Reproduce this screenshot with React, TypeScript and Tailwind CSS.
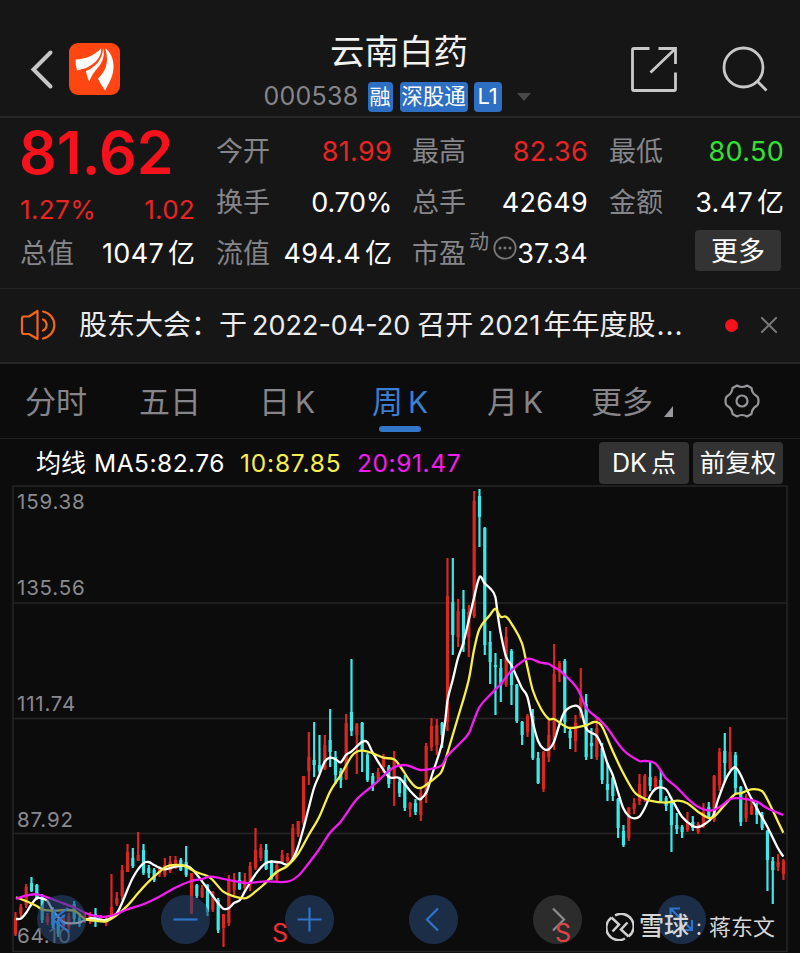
import type { ReactNode } from 'react'
import { clsx } from 'clsx'

// [direction, high, low, body top, body bottom] in chart coordinates
type Candle = ['r' | 'c', number, number, number?, number?]
type Point = [number, number]

const CANDLE_START = 15.5
const CANDLE_STEP = 5.333

const candles: Candle[] = [
  ['r', 912, 936, 918, 934], ['r', 904, 917], ['r', 884, 908], ['c', 877, 892, 883, 891], ['c', 884, 900, 885, 899],
  ['c', 894, 923], ['r', 913, 925], ['c', 907, 928], ['c', 919, 937], ['r', 915, 930],
  ['r', 913, 930], ['c', 901, 922], ['c', 915, 927], ['r', 913, 923], ['r', 912, 924],
  ['c', 908, 927, 914, 922], ['r', 915, 922], ['r', 916, 926], ['r', 874, 917, 907, 915], ['r', 892, 906, 898, 904],
  ['r', 865, 900, 870, 896], ['r', 844, 872, 852, 872], ['c', 848, 868, 858, 866], ['r', 832, 861, 855, 861], ['c', 844, 875, 850, 873],
  ['c', 865, 878, 868, 873], ['c', 868, 882, 870, 880], ['r', 866, 877], ['r', 858, 877, 865, 875], ['r', 856, 873, 862, 871],
  ['r', 856, 869, 860, 867], ['c', 858, 871, 860, 870], ['c', 846, 877, 862, 875], ['r', 873, 914, 873, 913], ['c', 884, 898, 885, 896],
  ['r', 885, 898, 888, 897], ['c', 884, 916, 885, 912], ['r', 891, 912, 892, 910], ['c', 898, 933, 900, 930], ['r', 914, 947, 914, 928],
  ['r', 875, 926, 880, 923], ['r', 873, 895, 882, 890], ['c', 872, 890, 880, 889], ['r', 873, 890, 880, 888], ['r', 862, 891, 866, 885],
  ['r', 828, 870, 850, 868], ['r', 844, 861, 848, 858], ['c', 844, 870, 850, 869], ['c', 860, 880, 863, 879], ['r', 863, 881, 865, 879],
  ['r', 850, 863, 855, 862], ['r', 853, 863, 857, 861], ['r', 824, 860, 828, 859], ['r', 821, 837, 821, 834], ['r', 776, 825, 776, 823],
  ['r', 732, 785, 757, 771], ['c', 722, 777, 760, 765], ['c', 735, 773, 765, 771], ['r', 735, 770, 745, 769], ['c', 709, 767, 740, 752],
  ['c', 751, 784, 757, 775], ['c', 768, 788, 771, 780], ['r', 714, 780, 723, 779], ['c', 659, 736, 712, 731], ['r', 723, 774, 724, 735],
  ['c', 722, 772, 723, 750], ['c', 753, 782, 755, 780], ['c', 773, 791, 776, 785], ['r', 768, 780, 772, 779], ['r', 754, 773, 757, 767],
  ['c', 765, 788, 767, 784], ['r', 751, 806, 759, 778], ['c', 777, 797, 782, 793], ['c', 775, 811, 780, 808], ['r', 802, 817, 803, 809],
  ['c', 799, 815, 803, 812], ['r', 788, 821, 793, 815], ['r', 743, 803, 746, 795], ['r', 718, 751, 726, 747], ['r', 719, 755, 725, 745],
  ['c', 722, 748, 723, 735], ['r', 558, 731, 596, 722], ['c', 558, 655, 602, 635], ['r', 599, 647, 611, 637], ['c', 590, 652, 609, 645],
  ['r', 605, 657, 612, 637], ['r', 491, 618, 501, 616], ['c', 489, 547, 496, 517], ['c', 527, 655, 528, 645], ['c', 631, 684, 642, 662],
  ['c', 653, 715, 665, 667], ['c', 659, 702, 668, 685], ['r', 627, 687, 637, 685], ['c', 649, 705, 651, 685], ['c', 684, 723, 685, 721],
  ['c', 721, 745, 722, 735], ['r', 714, 737, 716, 732], ['c', 709, 760, 716, 758], ['c', 752, 784, 758, 783], ['r', 751, 792, 752, 789],
  ['r', 720, 762, 735, 757], ['r', 644, 750, 674, 740], ['r', 661, 682, 663, 672], ['c', 659, 733, 661, 722], ['c', 727, 749, 731, 738],
  ['r', 715, 752, 723, 741], ['r', 668, 718, 698, 716], ['c', 694, 760, 704, 757], ['c', 728, 759, 743, 746], ['r', 717, 760, 728, 757],
  ['c', 743, 784, 748, 780], ['c', 763, 801, 784, 790], ['c', 777, 801, 778, 796], ['c', 798, 838, 799, 828], ['c', 825, 847, 831, 845],
  ['r', 807, 841, 808, 838], ['r', 798, 814, 803, 809], ['r', 774, 805, 784, 801], ['r', 774, 802, 776, 797], ['c', 762, 791, 777, 786],
  ['r', 776, 790, 778, 788], ['c', 770, 802, 780, 801], ['c', 796, 811, 798, 806], ['c', 800, 852, 802, 825], ['c', 813, 834, 825, 829],
  ['c', 825, 838, 827, 832], ['r', 812, 832, 821, 830], ['c', 816, 831, 822, 828], ['r', 822, 834, 824, 832], ['r', 803, 828, 812, 826],
  ['c', 802, 818, 807, 817], ['r', 775, 822, 776, 820], ['r', 748, 791, 752, 785], ['c', 733, 782, 751, 763], ['r', 727, 770, 752, 769],
  ['c', 752, 793, 755, 788], ['c', 786, 826, 787, 822], ['r', 794, 822, 803, 818], ['r', 798, 815, 806, 814], ['c', 803, 824, 808, 815],
  ['c', 812, 830, 815, 828], ['c', 830, 891, 831, 860], ['c', 857, 904, 861, 870], ['r', 854, 871, 862, 867], ['r', 859, 880, 861, 874],
]

const ma5: Point[] = [
  [16, 919], [21, 918.5], [26, 913], [31, 905], [37, 898], [42, 898.6], [47.5, 901], [52.5, 910], [58, 917], [63, 922], [69, 923.3],
  [79, 922.6], [90, 918.3], [106, 920], [116.7, 913.3], [122, 903], [132.7, 878], [143, 863.5], [148.7, 862], [154, 865], [164.7, 869.3],
  [175, 866.7], [186, 865.7], [193, 870], [207, 888], [218, 903], [223.3, 908.7], [228.7, 908.3], [234, 903], [240, 900], [244.7, 891.7],
  [255, 875], [266, 863], [280, 862.3], [287.3, 864.5], [293, 858.5], [298, 847], [303.3, 829], [308.7, 808], [314, 788], [319.3, 775],
  [324.7, 761.7], [330, 757.7], [335.3, 759], [340.7, 762.3], [346, 755], [351.3, 751.7], [362, 742], [367.3, 742], [372.7, 752.7],
  [388.7, 776.7], [399.3, 778], [410, 790.7], [418, 798.7], [420.7, 799], [426.7, 791.7], [432, 775], [442, 743.3], [445.3, 720],
  [447.6, 700], [452.7, 680], [458, 658], [463.3, 643], [474, 598], [479.6, 577], [484.7, 583.3], [490, 588.3], [495.3, 596.7],
  [498, 616.7], [500.7, 633.3], [506, 656.7], [511.3, 665], [522, 688.3], [527.3, 696.7], [533, 723], [538, 740.7], [543.3, 748.7],
  [548.7, 749.3], [554, 741.7], [559.3, 725], [564.7, 711.7], [575.3, 705.7], [580.7, 710], [586, 728.3], [591.3, 732.7], [596.7, 736],
  [602, 746.7], [607.3, 763], [612.7, 775], [618, 792], [623.3, 808.3], [628.7, 816], [634, 818.3], [639.3, 816.7], [644.7, 808.3],
  [650, 796], [655.3, 789], [660.7, 787.3], [666, 789.3], [671.3, 798.3], [682, 816.7], [692.7, 826], [698, 827], [703.3, 825],
  [712.7, 816.7], [718, 800], [724.7, 781.7], [730, 771.7], [735.3, 767.3], [740.7, 775], [748.7, 793.3], [756.7, 808.3],
  [767.3, 826.7], [778, 848.3], [783.3, 856.7],
]

const ma10: Point[] = [
  [16, 897.3], [26, 901], [36.7, 906], [42, 909.3], [52.7, 910.7], [66.7, 910], [74, 910.7], [79.3, 914], [84.7, 919], [95.3, 920.7],
  [106, 921.3], [116.7, 915], [127.3, 905.7], [138, 893.3], [148.7, 881.7], [164.7, 867.7], [170, 865.3], [180.7, 865], [186, 866.7],
  [196.7, 872.3], [207.3, 876], [212.7, 880], [223.3, 891.7], [234, 896.3], [244.7, 898.3], [250, 896], [255.3, 891.7], [263.3, 885],
  [276.7, 872], [287.3, 866], [298, 854], [308.7, 835], [319.3, 816.7], [330, 791.7], [340.7, 775], [351.3, 756.7], [356.7, 751.7],
  [363.3, 750.7], [372.7, 753.3], [383.3, 757.7], [394, 759.3], [399.3, 765], [410, 781], [415.3, 786.7], [420.7, 788], [426, 785],
  [436.7, 776.7], [442, 770.7], [447.3, 753.3], [457.5, 719], [468.7, 680], [474, 650], [479.3, 629.3], [490, 615], [495.3, 609],
  [500.7, 616.7], [506, 616.7], [511.3, 623.3], [522, 643.3], [527.3, 666.7], [532.7, 690], [540.7, 708.3], [548.7, 719], [554, 719],
  [564.7, 726], [570, 728], [586, 725.3], [594, 722], [599.3, 723.3], [603, 728.3], [612.7, 751], [623.3, 773.3], [634, 791.7],
  [639.3, 796], [650, 800.7], [666, 802.7], [678, 800.7], [687.3, 803.3], [698, 811.7], [708.7, 818], [714, 816.7], [724.7, 805],
  [735.3, 794], [740.7, 793.3], [751.3, 789.3], [762, 791], [767.3, 799.3], [778, 821.7], [783.3, 832.7],
]

const ma20: Point[] = [
  [16, 898.7], [26, 895.7], [36.7, 894.3], [47.3, 897.3], [63.3, 903.3], [74, 907.3], [84.7, 912.7], [95.3, 916], [106, 916.7],
  [116.7, 914], [127.3, 909.3], [143.3, 904.3], [159.3, 896.7], [175.3, 887.7], [191.3, 881], [202, 879], [210, 876.7], [220.7, 878.3],
  [234, 881], [244.7, 883], [255.3, 882.3], [265, 881.3], [287.3, 881.7], [298, 876], [308.7, 863.3], [319.3, 849], [330, 832.7],
  [340.7, 821.7], [356.7, 799.3], [372.7, 785.7], [383.3, 776], [394, 767.3], [404.7, 765], [412.7, 767.3], [420.7, 770], [434, 768.3],
  [442, 765], [447.3, 756], [460, 743.3], [468.7, 733.3], [474, 720], [479.3, 707.3], [490, 695], [500.7, 684], [511.3, 670.7],
  [522, 661.7], [529.3, 658.7], [540.7, 662.7], [548.7, 664], [554, 667.3], [559.3, 670], [564.7, 675], [575.3, 685.7], [580.7, 695],
  [586, 707.7], [599.3, 719.5], [606.7, 727.3], [623.3, 750], [639.3, 761], [644.7, 761], [655.3, 763.3], [666, 778.3], [676.7, 787.3],
  [687.3, 798.3], [698, 806.7], [710, 810.7], [719.3, 807.3], [730, 799.3], [740.7, 798.3], [756.7, 801.7], [767.3, 808.3], [783.3, 815],
]

// control points sit a third of the way along x, so the curve never loops back
function smoothPath(line: Point[]) {
  const slope = (i: number) => {
    const [x0, y0] = line[Math.max(i - 1, 0)]
    const [x1, y1] = line[Math.min(i + 1, line.length - 1)]
    return (y1 - y0) / (x1 - x0)
  }
  return line.reduce((path, [x, y], i) => {
    if (i === 0) return `M${x} ${y}`
    const [px, py] = line[i - 1]
    const dx = (x - px) / 3
    return `${path}C${px + dx} ${py + slope(i - 1) * dx} ${x - dx} ${y - slope(i) * dx} ${x} ${y}`
  }, '')
}

function Stat({ label, value, tone = 'text-white' }: { label: string; value: string; tone?: string }) {
  const unit = value.endsWith('亿')
  return (
    <div className="flex h-[51px] items-center justify-between">
      <span className="text-[27px] text-[#85858a]">{label}</span>
      <span className={clsx('text-[27px]', value.endsWith('%') ? 'tracking-[-0.3px]' : 'tracking-[0.3px]', tone)}>
        {unit ? value.slice(0, -1) : value}
        {unit && <span className="ml-1 tracking-normal">亿</span>}
      </span>
    </div>
  )
}

function Header() {
  return (
    <header className="flex h-[118px] border-b-2 border-[#272727]">
      <div className="flex w-[240px] items-start pt-[43px] pl-[29px]">
        <svg className="h-[52px] w-[40px]" viewBox="0 0 40 52" fill="none" stroke="#c6c6c6" strokeWidth="4" strokeLinecap="round">
          <path d="M21.500 9.500 4.500 26.500 21.500 43.500" strokeLinejoin="miter" />
        </svg>
        <svg className="h-[52px] w-[52px]" viewBox="0 0 52 52">
          <rect width="51" height="52" rx="9" fill="#ff4612" />
          <g fill="#fff">
            <path d="M6.7 16.5C17 16 25 12.500 32 5.500C33 10 30 16 25 20C20 24.500 14 26 8.300 27.500C6.800 24 6.500 20 6.700 16.500Z" />
            <path d="M34 5C36 12 34 17 31 22C27 27 23 31 20.300 38.700C18.500 35 17.500 31 17 28C25 25 34 17 34 5Z" />
            <path d="M36 5C42 9 45 17 44.500 25C44 34 40 40 36 47.500C34 44 31 40 29 35.500C36 29 41 20 36 5Z" />
          </g>
        </svg>
      </div>
      <div className="flex w-[320px] flex-col items-center">
        <h1 className="mt-[31px] h-[42px] pr-[2px] text-[34.5px] leading-[42px] text-[#f2f2f2]">云南白药</h1>
        <div className="mt-[8px] mr-[6px] flex h-[31px] items-center">
          <span className="mr-[9px] text-[25px] tracking-[0.3px] text-[#85858a]">000538</span>
          <span className="mr-[7px] flex h-[30px] w-[25px] items-center justify-center rounded-[4px] bg-[#2c6fc3] text-[21px] text-white">融</span>
          <span className="mr-[6px] flex h-[30px] w-[68px] items-center justify-center rounded-[4px] bg-[#2c6fc3] text-[21.5px] text-white">深股通</span>
          <span className="flex h-[30px] w-[28px] items-center justify-center rounded-[4px] bg-[#2c6fc3] text-[22px] text-white">L1</span>
          <svg className="ml-[15px] h-[8px] w-[14px]" viewBox="0 0 14 8">
            <path d="M0 0H14L7 8Z" fill="#48484a" />
          </svg>
        </div>
      </div>
      <div className="flex flex-1 items-start pt-[44px] pl-[68px]">
        <svg className="h-[50px] w-[52px]" viewBox="0 0 52 50" fill="none" stroke="#c8c8c8" strokeWidth="2.8">
          <path d="M21.5 4.5H6Q4.500 4.500 4.500 6V45Q4.500 46.500 6 46.500H46Q47.500 46.500 47.500 45V28.500" />
          <path d="M30.5 4.5H47.500V20M47 5 22.500 28.500" />
        </svg>
        <svg className="ml-[40px] h-[50px] w-[52px]" viewBox="0 0 52 50" fill="none" stroke="#c8c8c8" strokeWidth="2.8">
          <circle cx="23.5" cy="23.5" r="19.5" />
          <path d="M37 37 46.500 46.500" />
        </svg>
      </div>
    </header>
  )
}

function Quote() {
  return (
    <section className="flex h-[171px] border-b border-[#242424] pt-[8px] pl-[20px] leading-none">
      <div className="w-[175px]">
        <div className="-mt-[3px] -ml-[1px] h-[68px] text-[59px] leading-[60px] font-semibold text-[#f6121c]">81.62</div>
        <div className="flex h-[37px] items-center justify-between pt-[1px] text-[26px] text-[#ea2424]">
          <span className="tracking-[0.4px]">1.27%</span>
          <span className="tracking-[0.3px]">1.02</span>
        </div>
        <Stat label="总值" value="1047亿" />
      </div>
      <div className="ml-[21px] w-[176px]">
        <Stat label="今开" value="81.99" tone="text-[#ea2424]" />
        <Stat label="换手" value="0.70%" />
        <Stat label="流值" value="494.4亿" />
      </div>
      <div className="ml-[20px] w-[176px]">
        <Stat label="最高" value="82.36" tone="text-[#ea2424]" />
        <Stat label="总手" value="42649" />
        <div className="flex h-[51px] items-center whitespace-nowrap">
          <span className="text-[27px] text-[#85858a]">市盈</span>
          <span className="mb-[23px] ml-[3px] text-[20px] text-[#85858a]">动</span>
          <svg className="mb-[12px] ml-[4px] h-[24px] w-[24px] shrink-0" viewBox="0 0 24 24" fill="#77777a">
            <circle cx="12" cy="12" r="10.7" fill="none" stroke="#77777a" strokeWidth="1.8" />
            <circle cx="7" cy="12" r="1.5" />
            <circle cx="12" cy="12" r="1.5" />
            <circle cx="17" cy="12" r="1.5" />
          </svg>
          <span className="ml-auto text-[27px] tracking-[0.2px] text-white">37.34</span>
        </div>
      </div>
      <div className="ml-[21px] w-[175px]">
        <Stat label="最低" value="80.50" tone="text-[#35e035]" />
        <Stat label="金额" value="3.47亿" />
        <button className="mt-[2px] ml-[86px] flex h-[41px] w-[86px] items-center justify-center rounded-[4px] bg-[#333] pt-[2px] text-[27px] text-white">
          更多
        </button>
      </div>
    </section>
  )
}

function Notice() {
  return (
    <section className="flex h-[75px] items-center border-b-2 border-[#272727] pl-[20px]">
      <svg className="mb-[2px] h-[32px] w-[38px]" viewBox="0 0 38 32" fill="none" stroke="#f4651e" strokeWidth="2.2" strokeLinejoin="round">
        <path d="M17.500 2V30L9 25H4Q2 25 2 23V9.500Q2 7.500 4 7.500H9Z" />
        <path d="M23 10.500A6 6 0 0 1 23 21.500M23 2.500A13.700 13.700 0 0 1 23 29.500" strokeLinecap="round" />
      </svg>
      <p className="ml-[21px] flex w-[610px] items-baseline text-[28px] whitespace-nowrap text-[#ececec]">
        <span>股东大会：于</span>
        <span className="ml-[5px] text-[27px]">2022-04-20</span>
        <span className="ml-[7px]">召开</span>
        <span className="ml-[5px] text-[27.5px]">2021</span>
        <span className="ml-[3px]">年年度股</span>
        <span className="ml-[1px] tracking-[1px]">...</span>
      </p>
      <span className="mb-[1px] ml-[36px] h-[13px] w-[13px] rounded-full bg-[#f6121c]" />
      <svg className="mb-[1px] ml-[23px] h-[16px] w-[16px]" viewBox="0 0 16 16" stroke="#77777a" strokeWidth="2">
        <path d="M0 0 16 16M16 0 0 16" />
      </svg>
    </section>
  )
}

function Tab({ children, period, active, className }: { children: ReactNode; period?: boolean; active?: boolean; className: string }) {
  return (
    <div className={clsx('flex flex-col items-center text-[31px]', active ? 'text-[#3b7fd0]' : 'text-[#85858a]', className)}>
      <span className="mt-[15px] h-[47px] leading-[46px] whitespace-nowrap">
        {children}
        {period && <span className="ml-[5px] text-[30px]">K</span>}
      </span>
      {active && <span className="h-[6px] w-[42px] rounded-full bg-[#3276c8]" />}
    </div>
  )
}

function Tabs() {
  return (
    <nav className="flex h-[75px] border-b border-[#222]">
      <Tab className="w-[112px]">分时</Tab>
      <Tab className="w-[116px]">五日</Tab>
      <Tab className="w-[118px]" period>日</Tab>
      <Tab className="w-[108px]" period active>周</Tab>
      <Tab className="w-[122px]" period>月</Tab>
      <Tab className="w-[92px]">更多</Tab>
      <svg className="mt-[42px] -ml-[4px] h-[11px] w-[9px]" viewBox="0 0 9 11">
        <path d="M9 0V11H0Z" fill="#9a9a9e" />
      </svg>
      <svg className="mt-[20px] ml-[51px] h-[34px] w-[36px]" viewBox="0 0 36 34" fill="none" stroke="#96969a" strokeWidth="2.2">
        <path d="M13 1.500Q18 4.500 23 1.500L27.500 4Q28 9.500 32.500 12Q34.500 13 34.500 17Q34.500 21 32.500 22Q28 24.500 27.500 30L23 32.500Q18 29.500 13 32.500L8.500 30Q8 24.500 3.500 22Q1.500 21 1.500 17Q1.500 13 3.500 12Q8 9.500 8.500 4Z" strokeLinejoin="round" />
        <circle cx="18" cy="17" r="5.5" />
      </svg>
    </nav>
  )
}

function Averages() {
  return (
    <div className="flex h-[46px] items-center pl-[36px] text-[24.5px] leading-none text-white">
      <span className="w-[58px] pt-[3px] text-[25px]">均线</span>
      <span className="w-[146px] pt-[3px] tracking-[0.5px]">MA5:82.76</span>
      <span className="w-[117px] pt-[3px] tracking-[0.8px] text-[#f8ee4e]">10:87.85</span>
      <span className="w-[242px] pt-[3px] tracking-[0.6px] text-[#f41cf0]">20:91.47</span>
      <span className="mt-[2px] flex h-[42px] w-[90px] items-center justify-center rounded-[4px] bg-[#333] text-[25px]">
        DK<span className="ml-[4px]">点</span>
      </span>
      <span className="mt-[2px] ml-[4px] flex h-[42px] w-[90px] items-center justify-center rounded-[4px] bg-[#333] text-[25.5px]">前复权</span>
    </div>
  )
}

function RoundButton({ children, muted }: { children: ReactNode; muted?: boolean }) {
  return (
    <button className={clsx('flex h-[49px] w-[49px] items-center justify-center rounded-full', muted ? 'bg-[#424242]/60' : 'bg-[#274570]/60')}>
      <svg className="h-[49px] w-[49px]" viewBox="0 0 49 49" fill="none" stroke={muted ? '#8b8b8b' : '#2f74ca'} strokeWidth="2.2">
        {children}
      </svg>
    </button>
  )
}

function Chart() {
  return (
    <div className="relative h-[468px]">
      <svg className="block h-[468px] w-[800px]" viewBox="0 485 800 468">
        <g stroke="#262626" strokeWidth="1.5" fill="none">
          <rect x="13" y="486" width="774" height="465.5" />
          <path d="M13 603H787M13 718.500H787M13 833.500H787" />
        </g>
        {candles.map(([direction, high, low, top = high + 3, bottom = low - 3], index) => {
          const x = CANDLE_START + index * CANDLE_STEP
          return (
            <g key={index} stroke={direction === 'r' ? '#dc2622' : '#3de8e8'}>
              <path d={`M${x} ${high}V${low}`} strokeWidth="2.2" />
              <path d={`M${x} ${top}V${bottom}`} strokeWidth="3.2" />
            </g>
          )
        })}
        <g fill="none" strokeWidth="2.3" strokeLinejoin="round">
          <path d={smoothPath(ma5)} stroke="#fff" />
          <path d={smoothPath(ma10)} stroke="#f8ee4e" />
          <path d={smoothPath(ma20)} stroke="#f41cf0" />
        </g>
      </svg>
      <div className="absolute top-0 left-[17px] text-[20.5px] leading-[24px] tracking-[0.8px] text-[#8a8a8e]">
        <div className="mt-[5px]">159.38</div>
        <div className="mt-[62px]">135.56</div>
        <div className="mt-[92px]">111.74</div>
        <div className="mt-[92px]">87.92</div>
        <div className="mt-[92px]">64.10</div>
      </div>
      <div className="absolute top-[410px] left-[36.5px] flex gap-[75.2px]">
        <RoundButton>
          <path d="M31 13 16 24.500 32 37M17 14V34M28 20 22 24.500 28 30" />
        </RoundButton>
        <RoundButton>
          <path d="M12.500 24.500H36.500" />
        </RoundButton>
        <RoundButton>
          <path d="M12.500 24.500H36.500M24.500 12.500V36.500" />
        </RoundButton>
        <RoundButton>
          <path d="M29 13.500 18 24.500 29 35.500" />
        </RoundButton>
        <RoundButton muted>
          <path d="M20 13.500 31 24.500 20 35.500" />
        </RoundButton>
        <RoundButton>
          <path d="M13.500 23V13.500H23M13.500 13.500 22 22M35 25V35H26M35 35 27 27" />
        </RoundButton>
      </div>
      <span className="absolute top-[434px] left-[272px] text-[25px] leading-[28px] text-[#f23030]">S</span>
      <span className="absolute top-[434px] left-[555px] text-[25px] leading-[28px] text-[#e04545]">S</span>
      <div className="absolute top-[426px] left-[606px] flex h-[32px] items-center text-[22px] text-[#d6d6d6]">
        <svg className="mb-[1px] h-[28px] w-[28px]" viewBox="0 0 28 28" fill="none" stroke="#d0d0d0" strokeWidth="2.5">
          <path d="M9 2.500A12.500 12.500 0 0 1 22.500 23.500M19 25.500A12.500 12.500 0 0 1 5.500 4.500" />
          <path d="M5.500 4.500 13 11.500 6.500 18.500M22.500 23.500 15 16.500 21.500 9.500" />
        </svg>
        <span className="ml-[5px] text-[25px] font-medium">雪球</span>
        <span className="w-[20px] text-center">:</span>
        <span>蒋东文</span>
      </div>
    </div>
  )
}

export default function App() {
  return (
    <main className="h-[953px] w-[800px] overflow-hidden bg-[#0c0c0c] font-['Inter','Noto_Sans_CJK_SC',sans-serif]">
      <div className="bg-[#161616]">
        <Header />
        <Quote />
        <Notice />
      </div>
      <Tabs />
      <Averages />
      <Chart />
    </main>
  )
}
